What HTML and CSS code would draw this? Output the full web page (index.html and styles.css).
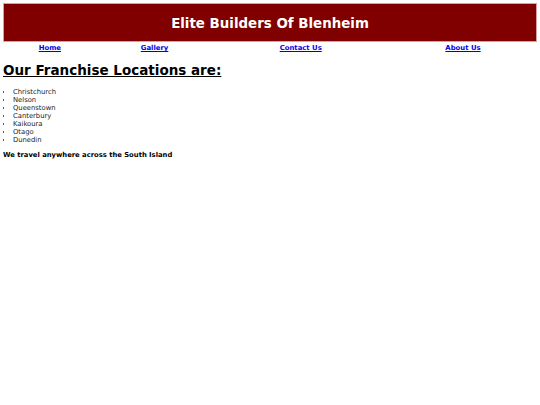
FILE: index.html
```html
<!DOCTYPE html>
<html>
<head>
<meta charset="utf-8">
<title>Elite Builders Of Blenheim</title>
<link rel="stylesheet" href="styles.css">
</head>
<body>
<div class="banner"><h1 class="title">Elite Builders Of Blenheim</h1></div>
<table class="nav">
<tr>
<td><a href="#">Home</a></td>
<td><a href="#">Gallery</a></td>
<td><a href="#">Contact Us</a></td>
<td><a href="#">About Us</a></td>
</tr>
</table>
<h2 class="heading">Our Franchise Locations are:</h2>
<ul class="locations">
<li>Christchurch</li>
<li>Nelson</li>
<li>Queenstown</li>
<li>Canterbury</li>
<li>Kaikoura</li>
<li>Otago</li>
<li>Dunedin</li>
</ul>
<p class="note">We travel anywhere across the South Island</p>
</body>
</html>
```
FILE: styles.css
```css
body {
  margin: 3px;
  font-family: "DejaVu Sans", Verdana, sans-serif;
  color: #000;
  background: #fff;
}
.banner {
  background: #800000;
  border: 1px solid #d8a0a0;
  height: 37px;
  display: flex;
  align-items: center;
  justify-content: center;
}
.title {
  margin: 1px 0 0;
  color: #fff;
  font-size: 13.4px;
  font-weight: bold;
}
.nav {
  width: 100%;
  border-collapse: collapse;
  margin-top: 2px;
}
.nav td {
  padding: 0;
  text-align: center;
  font-size: 6.9px;
  font-weight: bold;
}
.nav a {
  color: #0000ee;
}
.heading {
  margin: 10px 0 10px;
  font-size: 13.5px;
  font-weight: bold;
  text-decoration: underline;
}
.locations {
  margin: 0;
  padding-left: 10px;
  font-size: 6.8px;
  line-height: 8px;
  color: #222;
}
.note {
  margin: 7px 0 0;
  font-size: 6.8px;
  font-weight: bold;
}
```
